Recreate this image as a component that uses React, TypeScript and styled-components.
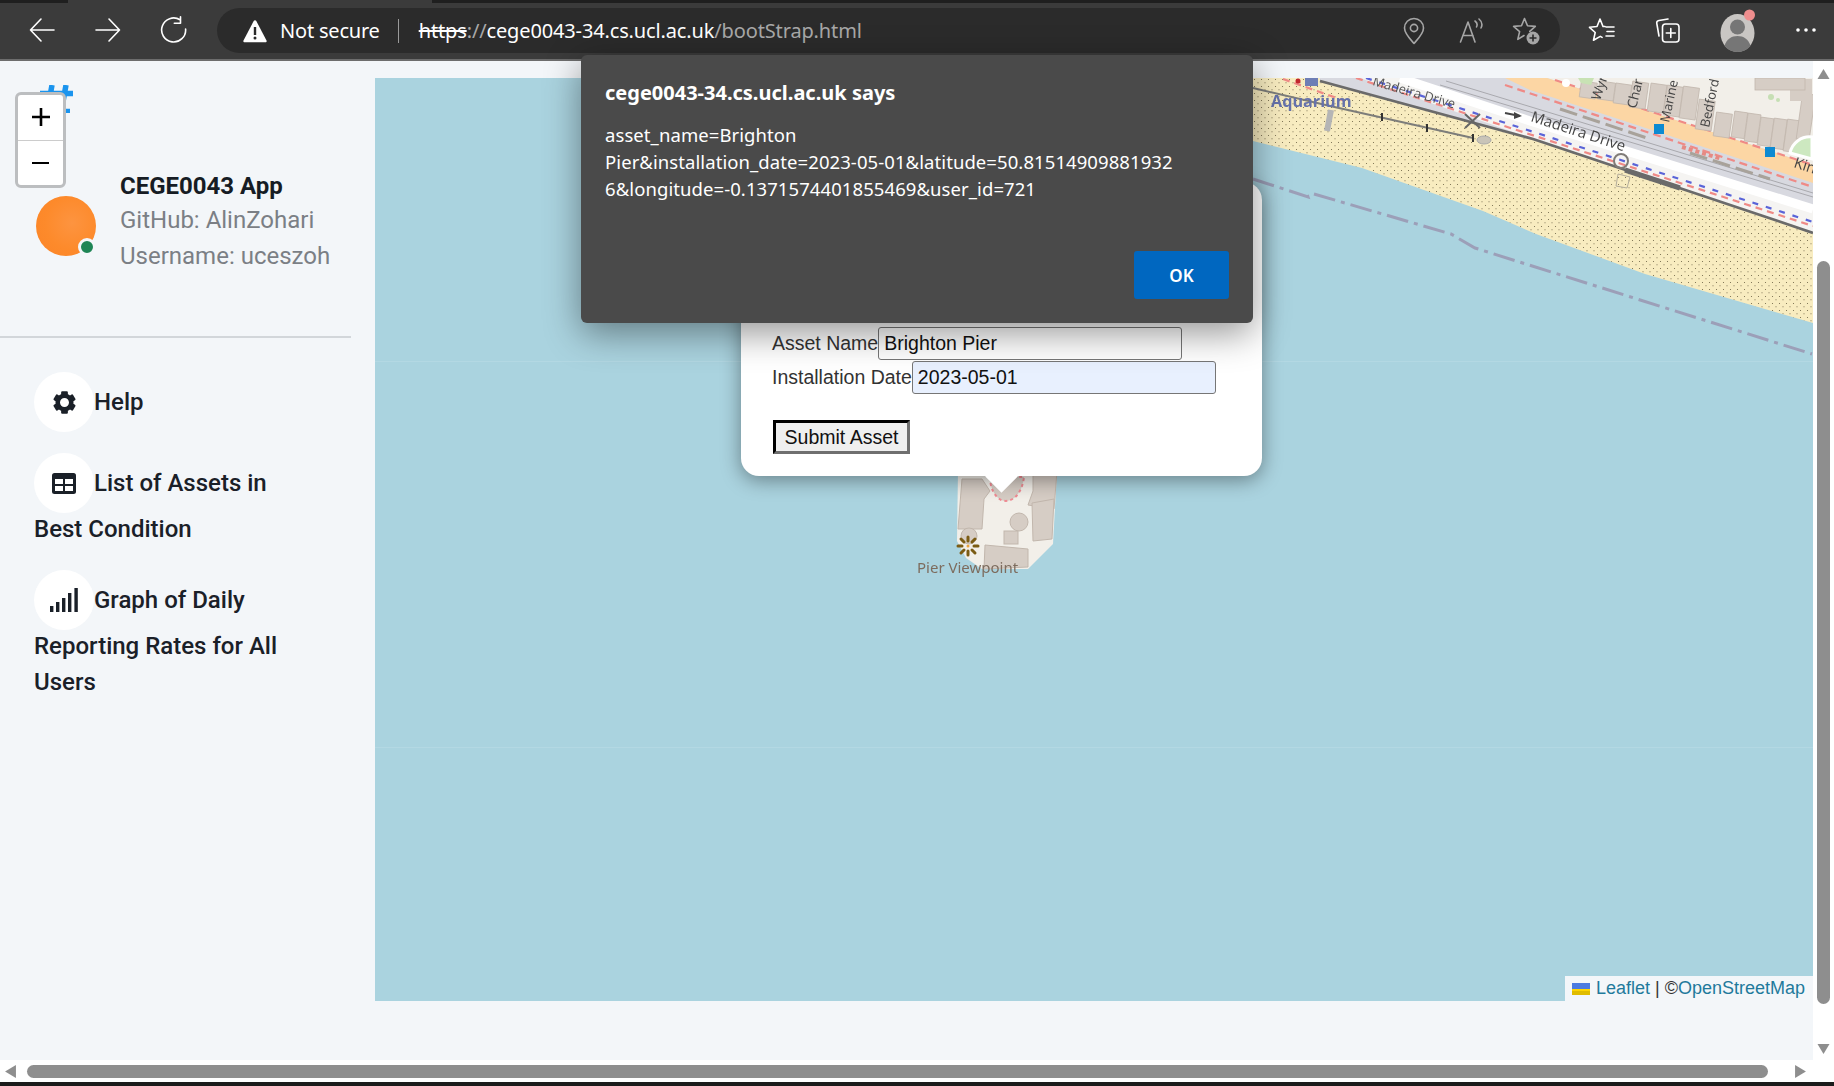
import React from "react";
import styled, { createGlobalStyle } from "styled-components";
import { BiSolidCog } from "react-icons/bi";

const Global = createGlobalStyle`
  html, body { margin: 0; padding: 0; width: 1834px; height: 1086px; overflow: hidden; background: #f3f6f9; }
  * { box-sizing: border-box; }
`;

const Shell = styled.div`
  position: relative;
  width: 1834px;
  height: 1086px;
  display: flex;
  flex-direction: column;
  overflow: hidden;
  background: #f3f6f9;
`;

/* ---------- browser chrome ---------- */
const TabStrip = styled.div`
  height: 3px;
  flex: none;
  background: #1f1f1f;
  display: flex;
`;
const TabEdge = styled.div`
  margin-left: 68px;
  width: 364px;
  background: #3b3b3b;
`;
const Toolbar = styled.div`
  height: 58px;
  flex: none;
  background: #3b3b3b;
  border-bottom: 2px solid #6d6d6d;
  display: flex;
  align-items: flex-start;
  padding-left: 9px;
  color: #fff;
`;
const NavButton = styled.div`
  width: 66px;
  height: 54px;
  display: flex;
  align-items: center;
  justify-content: center;
  flex: none;
`;
const AddressBar = styled.div`
  margin: 5px 8px 0 10px;
  width: 1343px;
  height: 45px;
  flex: none;
  background: #2b2b2b;
  border-radius: 23px;
  display: flex;
  align-items: center;
  padding: 0 6px 0 26px;
  font-family: "Noto Sans", sans-serif;
  font-size: 20px;
`;
const NotSecure = styled.span`
  margin-left: 13px;
  color: #fff;
  letter-spacing: -0.2px;
`;
const Separator = styled.div`
  width: 1px;
  height: 24px;
  background: #9a9a9a;
  margin: 0 20px 0 18px;
`;
const Url = styled.div`
  flex: 1;
  color: #fff;
  letter-spacing: -0.14px;
  white-space: nowrap;
`;
const Struck = styled.span`
  color: #fff;
  text-decoration: line-through;
`;
const Dim = styled.span`
  color: #a8a8a8;
`;
const BarIcon = styled.div`
  width: 56px;
  height: 45px;
  display: flex;
  align-items: center;
  justify-content: center;
  flex: none;
`;
const ToolIcon = styled.div`
  width: 67px;
  height: 54px;
  display: flex;
  align-items: center;
  justify-content: center;
  flex: none;
`;

/* ---------- page ---------- */
const Content = styled.div`
  flex: 1;
  min-height: 0;
  display: flex;
`;
const Sidebar = styled.aside`
  width: 375px;
  flex: none;
  font-family: Roboto, sans-serif;
  color: #1a2028;
`;
const Logo = styled.svg`
  display: block;
  margin: 24px 0 0 39px;
`;
const Profile = styled.div`
  display: flex;
  align-items: flex-start;
  margin-top: 58px;
  padding-left: 36px;
  height: 165px;
`;
const Avatar = styled.div`
  position: relative;
  width: 60px;
  height: 60px;
  border-radius: 50%;
  flex: none;
  margin: 25px 24px 0 0;
  background: radial-gradient(circle at 60% 45%, #fd9440 0%, #fd8a2b 55%, #fb8427 100%);
`;
const StatusDot = styled.span`
  position: absolute;
  right: 0;
  bottom: 0;
  width: 18px;
  height: 18px;
  border-radius: 50%;
  background: #1e8555;
  border: 3px solid #f3f6f9;
`;
const ProfileText = styled.div`
  display: flex;
  flex-direction: column;
`;
const AppName = styled.div`
  font-size: 24px;
  font-weight: 700;
  line-height: 31px;
  color: #161c24;
`;
const ProfileLine = styled.div`
  font-size: 24px;
  line-height: 36px;
  color: #7b7f85;
`;
const Rule = styled.hr`
  margin: 0 24px 0 0;
  border: 0;
  height: 2px;
  background: #d2d6da;
`;
const Nav = styled.nav`
  padding: 40px 74px 0 34px;
`;
const NavItem = styled.div`
  font-size: 24px;
  font-weight: 500;
  line-height: 36px;
  margin-bottom: 29px;
`;
const IconCircle = styled.span`
  display: inline-flex;
  align-items: center;
  justify-content: center;
  width: 60px;
  height: 60px;
  border-radius: 50%;
  background: #fff;
  vertical-align: middle;
  margin: -6px 0 -2px 0;
`;

const Main = styled.main`
  flex: 1;
  min-width: 0;
  padding-top: 17px;
`;
const MapFrame = styled.div`
  position: relative;
  width: 100%;
  height: 923px;
  background: #aad3df;
  overflow: hidden;
`;
const MapArt = styled.svg`
  position: absolute;
  inset: 0;
  filter: blur(0.45px);
`;
const Attribution = styled.div`
  position: absolute;
  right: 0;
  bottom: 0;
  height: 25px;
  padding: 0 8px 0 7px;
  display: flex;
  align-items: center;
  gap: 6px;
  background: #f3f6f9;
  font-family: "Liberation Sans", Arial, sans-serif;
  font-size: 18px;
  color: #333;
`;
const MapLink = styled.span`
  color: #1f7a9c;
`;
const Popup = styled.div`
  position: absolute;
  left: 366px;
  top: 104px;
  width: 521px;
  height: 294px;
  background: #fff;
  border-radius: 18px;
  box-shadow: 0 4px 20px rgba(0, 0, 0, 0.4);
  padding: 145px 0 0 32px;
  font-family: "Liberation Sans", Arial, sans-serif;
  font-size: 19.5px;
  color: #333;
`;
const PopupTip = styled.div`
  position: absolute;
  left: 238px;
  bottom: -17px;
  width: 44px;
  height: 17px;
  overflow: hidden;
  &::after {
    content: "";
    position: absolute;
    left: 10.5px;
    top: -11.5px;
    width: 23px;
    height: 23px;
    background: #fff;
    transform: rotate(45deg);
  }
`;
const FormRow = styled.div`
  display: flex;
  align-items: center;
  height: 33px;
  margin-bottom: 1px;
  margin-left: -1px;
`;
const Field = styled.input<{ $filled?: boolean }>`
  width: 304px;
  height: 33px;
  flex: none;
  padding: 1px 5px;
  border: 1px solid #767676;
  border-radius: 3px;
  background: ${(p) => (p.$filled ? "#e8f0fe" : "#fff")};
  font: inherit;
  color: #111;
  outline: none;
`;
const SubmitButton = styled.button`
  display: block;
  margin-top: 26px;
  width: 137px;
  height: 34px;
  padding: 0;
  background: #efefef;
  border-style: solid;
  border-width: 3px;
  border-color: #000 #6f6f6f #6f6f6f #000;
  font: inherit;
  color: #111;
`;

/* ---------- scrollbars ---------- */
const VScroll = styled.div`
  width: 21px;
  flex: none;
  background: #fff;
  display: flex;
  flex-direction: column;
  align-items: center;
  padding-top: 8px;
`;
const VThumb = styled.div`
  width: 13px;
  height: 743px;
  margin: 182px 0 40px;
  border-radius: 7px;
  background: #8e8e8e;
`;
const HScroll = styled.div`
  height: 22px;
  flex: none;
  background: #fff;
  display: flex;
  align-items: center;
  padding-left: 5px;
`;
const HThumb = styled.div`
  width: 1741px;
  height: 13px;
  margin: 0 27px 0 11px;
  border-radius: 7px;
  background: #8e8e8e;
`;
const BottomEdge = styled.div`
  height: 4px;
  flex: none;
  background: #1b1b1b;
`;

/* ---------- overlays ---------- */
const ZoomControl = styled.div`
  position: absolute;
  left: 15px;
  top: 92px;
  width: 51px;
  height: 96px;
  border: 3px solid #bcbec0;
  border-radius: 6px;
  background: #fff;
  display: flex;
  flex-direction: column;
  overflow: hidden;
`;
const ZoomButton = styled.div`
  flex: 1;
  display: flex;
  align-items: center;
  justify-content: center;
  & + & { border-top: 1px solid #ccc; }
`;
const Dialog = styled.div`
  position: absolute;
  left: 581px;
  top: 55px;
  width: 672px;
  height: 268px;
  background: #4a4a4a;
  border-radius: 6px;
  box-shadow: 0 10px 36px rgba(0, 0, 0, 0.42);
  padding: 24px 20px 0 24px;
  color: #fff;
  font-family: "Noto Sans", sans-serif;
`;
const DialogTitle = styled.div`
  font-size: 20px;
  font-weight: 700;
  line-height: 28px;
`;
const DialogBody = styled.div`
  margin-top: 14px;
  font-size: 18.5px;
  line-height: 27px;
  letter-spacing: 0.08px;
  white-space: nowrap;
`;
const DialogActions = styled.div`
  display: flex;
  justify-content: flex-end;
  margin: 49px 4px 0 0;
`;
const OkButton = styled.div`
  width: 95px;
  height: 48px;
  border-radius: 3px;
  background: #0067c0;
  display: flex;
  align-items: center;
  justify-content: center;
  font-size: 17px;
  font-weight: 600;
`;

/* ---------- drawings ---------- */
const Line = ({ d, w = 1.6, c = "#fff" }: { d: string; w?: number; c?: string }) => (
  <path d={d} fill="none" stroke={c} strokeWidth={w} strokeLinecap="round" strokeLinejoin="round" />
);
const BackIcon = () => (
  <svg width="28" height="28" viewBox="0 0 28 28">
    <Line d="M26 14H2.5M13 3 2.5 14 13 25" />
  </svg>
);
const ForwardIcon = () => (
  <svg width="28" height="28" viewBox="0 0 28 28">
    <Line d="M2 14h23.5M15 3l10.5 11L15 25" />
  </svg>
);
const ReloadIcon = () => (
  <svg width="28" height="28" viewBox="0 0 28 28">
    <Line d="M20 3.8A12 12 0 1 0 25.6 13M20.5 0.8v6.4h-6.2" />
  </svg>
);
const WarnIcon = () => (
  <svg width="24" height="24" viewBox="0 0 24 24">
    <path d="M12 1.2c.6 0 1 .3 1.3.8l10.2 19.6c.4.8-.1 1.6-1 1.6H1.5c-.9 0-1.4-.8-1-1.6L10.7 2c.3-.5.7-.8 1.3-.8z" fill="#fff" />
    <rect x="10.8" y="8" width="2.4" height="8" fill="#2b2b2b" />
    <circle cx="12" cy="19" r="1.5" fill="#2b2b2b" />
  </svg>
);
const PinIcon = () => (
  <svg width="24" height="28" viewBox="0 0 24 28">
    <Line c="#a6a6a6" d="M12 26.5C8 22 2.5 16.5 2.5 11a9.5 9.5 0 0 1 19 0c0 5.5-5.5 11-9.5 15.5z" />
    <circle cx="12" cy="11" r="3.6" fill="none" stroke="#a6a6a6" strokeWidth="1.6" />
  </svg>
);
const ReadIcon = () => (
  <svg width="26" height="26" viewBox="-2 0 26 26">
    <Line c="#a6a6a6" d="M1.5 24 9 4l7 20M4 17.5h10M16 3c2 1.500 2.500 4 1.500 6M20 1c3 2.500 3.500 6 2 9" />
  </svg>
);
const FavAddIcon = () => (
  <svg width="30" height="30" viewBox="-1 0 30 30">
    <Line c="#a6a6a6" d="M12.5 2.5l3 7.2 7.800.7-5.500 5M12 19.500l-6.200 3.900 1.800-7.800-6-5.200 7.900-.7 3-7.200" />
    <circle cx="21" cy="22" r="6.500" fill="#a6a6a6" />
    <path d="M21 18.500v7M17.500 22h7" stroke="#2b2b2b" strokeWidth="1.600" />
  </svg>
);
const FavoritesIcon = () => (
  <svg width="28" height="28" viewBox="0 0 28 28">
    <Line d="M12 3 9 10.500l-7.500.8 5.700 5.200-1.700 7.700 6.800-3.800 1.800 1M12 3l3 7.500h2M18 11h8M19 15.500h7M18 20h8" />
  </svg>
);
const CollectionsIcon = () => (
  <svg width="30" height="30" viewBox="2 0 30 30">
    <Line d="M16 4l-9 1.500c-1.500.3-2.500 1.500-2.200 3L7 21" />
    <rect x="10.500" y="9" width="16.500" height="18" rx="3" fill="none" stroke="#fff" strokeWidth="1.600" />
    <Line d="M18.800 13.500v9M14.300 18h9" />
  </svg>
);
const ProfileIcon = () => (
  <svg width="38" height="44" viewBox="-3.500 0 38 44">
    <ellipse cx="17" cy="25" rx="17" ry="19" fill="#c9c6c3" />
    <circle cx="17" cy="19" r="7.500" fill="#767676" />
    <path d="M4 38c2-7 7-10 13-10s11 3 13 10c-3.500 4-8 6-13 6s-9.500-2-13-6z" fill="#767676" />
    <circle cx="29" cy="7" r="5.500" fill="#ef8e8e" />
  </svg>
);
const DotsIcon = () => (
  <svg width="28" height="6" viewBox="-6 0 28 6">
    <circle cx="3" cy="3" r="1.800" fill="#fff" />
    <circle cx="11" cy="3" r="1.800" fill="#fff" />
    <circle cx="19" cy="3" r="1.800" fill="#fff" />
  </svg>
);
const TableIcon = () => (
  <svg width="24" height="21" viewBox="0 0 24 21">
    <rect width="24" height="21" rx="2.500" fill="#1a2028" />
    <rect x="3" y="6" width="8" height="5" fill="#fff" />
    <rect x="13" y="6" width="8" height="5" fill="#fff" />
    <rect x="3" y="13" width="8" height="5" fill="#fff" />
    <rect x="13" y="13" width="8" height="5" fill="#fff" />
  </svg>
);
const SignalIcon = () => (
  <svg width="28" height="24" viewBox="0 0 28 24">
    <rect x="0" y="18" width="3.400" height="6" fill="#1a2028" />
    <rect x="6" y="14" width="3.400" height="10" fill="#1a2028" />
    <rect x="12" y="10" width="3.400" height="14" fill="#1a2028" />
    <rect x="18" y="5" width="3.400" height="19" fill="#1a2028" />
    <rect x="24.400" y="0" width="3.400" height="24" fill="#1a2028" />
  </svg>
);
const Arrow = ({ dir }: { dir: "up" | "down" | "left" | "right" }) => {
  const pts = { up: "6,0 12,10 0,10", down: "0,0 12,0 6,10", left: "10,0 10,12 0,6", right: "0,0 10,6 0,12" }[dir];
  const horizontal = dir === "left" || dir === "right";
  return (
    <svg width={horizontal ? 11 : 13} height={horizontal ? 13 : 10} viewBox={horizontal ? "0 0 10 12" : "0 0 12 10"} style={{ flex: "none" }}>
      <polygon points={pts} fill="#8e8e8e" />
    </svg>
  );
};

const C = { land: "#f2efe9", bld: "#d6cdc5", bldEdge: "#c2b7ad", sand: "#f8ecc0", orange: "#fcd6a4", rail: "#d8d9e0" };

const terrace: [number, number, number][] = [
  [1582, 76, 16], [1600, 78, 18], [1616, 82, 20], [1632, 86, 26], [1650, 90, 28], [1666, 94, 30], [1682, 97, 32],
  [1698, 108, 30], [1716, 115, 24], [1734, 116, 26], [1747, 120, 28], [1760, 124, 28], [1773, 127, 30], [1786, 130, 32], [1799, 118, 46],
];

const MapDrawing = () => (
  <MapArt width="1438" height="923" viewBox="375 77 1438 923">
    <defs>
      <pattern id="sandDots" width="7" height="7" patternUnits="userSpaceOnUse">
        <circle cx="1.500" cy="1.500" r="0.550" fill="#6f6548" />
        <circle cx="5" cy="4.800" r="0.550" fill="#6f6548" />
      </pattern>
    </defs>
    <rect x="375" y="360" width="1438" height="1" fill="#b3d8e3" />
    <rect x="375" y="746" width="1438" height="1" fill="#b3d8e3" />
    {/* beach */}
    <polygon points="1253,77 1813,77 1813,322 1645,273 1536,233 1483,210 1362,167 1253,140" fill={C.sand} />
    <polygon points="1253,77 1813,77 1813,322 1645,273 1536,233 1483,210 1362,167 1253,140" fill="url(#sandDots)" />
    {/* ground above the beach */}
    <polygon points="1320,77 1813,77 1813,232 1533,138 1320,80" fill={C.rail} />
    <polygon points="1360,77 1400,77 1813,208 1813,232 1533,138" fill="#f5f4f2" />
    <polygon points="1547,77 1813,77 1813,164" fill={C.land} />
    <polygon points="1505,77 1547,77 1813,164 1813,182 1530,89" fill={C.orange} />
    <path d="M1400 77 1530 120 1813 208" stroke="#fff" strokeWidth="9" fill="none" />
    <path d="M1440 84 1813 196M1446 80 1813 192" stroke="#a9a9ae" strokeWidth="1" fill="none" />
    {/* dashed paths */}
    <path d="M1505 84 1813 186M1555 79 1813 164" stroke="#ef8a86" strokeWidth="2.200" strokeDasharray="8 5" fill="none" />
    <path d="M1283 78 1345 100M1356 77 1813 225" stroke="#ef8a86" strokeWidth="2.200" strokeDasharray="7 5" fill="none" />
    <path d="M1366 77 1813 221" stroke="#5a64d8" strokeWidth="2.200" strokeDasharray="6 8" fill="none" />
    <path d="M1320 80 1533 138 1778 220 1813 232" stroke="#6a6a6a" strokeWidth="2.800" fill="none" />
    <path d="M1625 169 1680 187" stroke="#6a6a6a" strokeWidth="5" fill="none" />
    <path d="M1560 108 1650 138M1690 152 1770 178" stroke="#a8a29a" strokeWidth="3" fill="none" strokeDasharray="18 6" />
    <path d="M1682 146 1722 158" stroke="#e58a84" strokeWidth="4" strokeDasharray="4 3" fill="none" />
    {/* buildings */}
    {terrace.map(([x, y, h]) => (
      <rect key={x} x={x} y={y - h + 20} width={x > 1730 ? 13 : 16} height={h} fill={C.bld} stroke={C.bldEdge} strokeWidth="0.800" transform={`rotate(8 ${x} ${y})`} />
    ))}
    <rect x="1790" y="78" width="22" height="22" fill={C.bld} />
    <rect x="1755" y="77" width="50" height="12" fill={C.bld} stroke={C.bldEdge} strokeWidth="0.800" />
    <circle cx="1771" cy="96" r="3" fill="#c6dfb4" />
    <circle cx="1778" cy="99" r="2" fill="#c6dfb4" />
    <path d="M1578 77h16l-3 7-10-2z" fill="#c8e2b4" />
    <circle cx="1566" cy="82" r="4" fill="#fff" />
    <path d="M1790 152a20 20 0 0 1 22-16v22z" fill="#cde8c0" stroke="#fff" strokeWidth="3" />
    {/* aquarium corner */}
    <rect x="1305" y="77" width="13" height="8" fill="#6e7eb5" />
    <circle cx="1298" cy="80" r="2.500" fill="#c0262d" />
    <path d="M1331 109 1327 130" stroke="#b5b5b5" strokeWidth="6" />
    {/* pier on the beach */}
    <path d="M1253 87 1330 105 1473 137" stroke="#7d7d7a" strokeWidth="2" fill="none" />
    <path d="M1382 112v8M1427 123v8M1473 133v8" stroke="#333" strokeWidth="2" />
    <ellipse cx="1484" cy="139" rx="7" ry="4" fill="#c9c4b8" stroke="#aaa" />
    <path d="M1465 113 1480 127M1480 113 1465 127" stroke="#666" strokeWidth="2" />
    <path d="M1505 112 1520 115" stroke="#444" strokeWidth="2" />
    <polygon points="1522,115 1514,111 1514,118" fill="#444" />
    {/* small shapes over the beach */}
    <circle cx="1621" cy="160" r="7" fill="none" stroke="#807c78" strokeWidth="2" />
    <polygon points="1618,173 1630,176 1627,187 1616,185" fill="none" stroke="#b4ad9b" />
    {/* markers */}
    <rect x="1654" y="123" width="10" height="10" fill="#0d8ad2" />
    <rect x="1765" y="146" width="10" height="10" fill="#0d8ad2" />
    {/* boundary */}
    <path d="M1253 178 1290 190 1308 196 1306 190M1314 193 1451 233 1475 247 1812 353" stroke="#9c9fb8" strokeWidth="3" strokeDasharray="22 6 4 6" fill="none" />
    {/* pier head */}
    <polygon points="958,470 1057,470 1053,543 1028,568 982,568 966,557 957,540" fill={C.land} />
    <path d="M962 478h20l8 12-6 8-2 30-24 0z" fill={C.bld} stroke={C.bldEdge} />
    <path d="M1033 470h24l-3 38-26-4 5-14z" fill={C.bld} stroke={C.bldEdge} />
    <path d="M1032 502 1054 498 1052 538 1033 540z" fill={C.bld} stroke={C.bldEdge} />
    <circle cx="1019" cy="521" r="9" fill={C.bld} stroke={C.bldEdge} />
    <rect x="1004" y="530" width="14" height="13" fill={C.bld} stroke={C.bldEdge} />
    <circle cx="969" cy="535" r="8" fill={C.bld} stroke={C.bldEdge} />
    <path d="M985 544 1028 548 1028 566 984 568z" fill={C.bld} stroke={C.bldEdge} />
    <path d="M990 476c0 10 4 19 11 23 11 4 21-6 23-23z" fill={C.bld} stroke="#ef8a92" strokeWidth="2" strokeDasharray="3 3" />
    <g stroke="#7b5c14" strokeWidth="3" strokeLinecap="round">
      <path d="M968 536v4M968 550v4M958 545h4M974 545h4M961 538l3 3M975 538l-3 3M961 552l3-3M975 552l-3-3" />
    </g>
    <circle cx="968" cy="545" r="1.500" fill="#e8a23c" />
    <text x="917" y="572" fontFamily="'Noto Sans', sans-serif" fontSize="15" fill="#7d6c5e">Pier Viewpoint</text>
    {/* labels */}
    <text x="1271" y="106" fontFamily="'Open Sans', sans-serif" fontWeight="700" fontSize="16.200" fill="#6672ab">Aquarium</text>
    <text transform="translate(1372 84) rotate(16)" fontFamily="'Open Sans', sans-serif" fontSize="13" fill="#555">Madeira Drive</text>
    <text transform="translate(1530 120) rotate(18)" fontFamily="'Open Sans', sans-serif" fontSize="15" fill="#444">Madeira Drive</text>
    <text transform="translate(1600 100) rotate(-72)" fontFamily="'Open Sans', sans-serif" fontSize="13.500" fill="#444">Wyn</text>
    <text transform="translate(1636 108) rotate(-76)" fontFamily="'Open Sans', sans-serif" fontSize="13.500" fill="#444">Char</text>
    <text transform="translate(1669 122) rotate(-78)" fontFamily="'Open Sans', sans-serif" fontSize="13" fill="#444">Marine</text>
    <text transform="translate(1709 127) rotate(-78)" fontFamily="'Open Sans', sans-serif" fontSize="13" fill="#444">Bedford</text>
    <text transform="translate(1793 166) rotate(18)" fontFamily="'Open Sans', sans-serif" fontSize="15" fill="#444">Kin</text>
  </MapArt>
);

const Flag = () => (
  <svg width="18" height="12" viewBox="0 0 18 12">
    <rect width="18" height="6" fill="#4C7BE1" />
    <rect y="6" width="18" height="2" fill="#FFD500" />
    <rect y="8" width="18" height="4" fill="#E0BC00" />
  </svg>
);

export default function App() {
  return (
    <Shell>
      <Global />
      <TabStrip><TabEdge /></TabStrip>
      <Toolbar>
        <NavButton><BackIcon /></NavButton>
        <NavButton><ForwardIcon /></NavButton>
        <NavButton><ReloadIcon /></NavButton>
        <AddressBar>
          <WarnIcon />
          <NotSecure>Not secure</NotSecure>
          <Separator />
          <Url>
            <Dim><Struck>https</Struck>://</Dim>cege0043-34.cs.ucl.ac.uk<Dim>/bootStrap.html</Dim>
          </Url>
          <BarIcon><PinIcon /></BarIcon>
          <BarIcon><ReadIcon /></BarIcon>
          <BarIcon><FavAddIcon /></BarIcon>
        </AddressBar>
        <ToolIcon><FavoritesIcon /></ToolIcon>
        <ToolIcon><CollectionsIcon /></ToolIcon>
        <ToolIcon><ProfileIcon /></ToolIcon>
        <ToolIcon><DotsIcon /></ToolIcon>
      </Toolbar>
      <Content>
        <Sidebar>
          <Logo width="34" height="28" viewBox="0 0 34 28">
            <path d="M13 0 8 28M27 0 22 28M1 8.500h33M24 26.500h7" stroke="#1a94ee" strokeWidth="5.500" fill="none" />
          </Logo>
          <Profile>
            <Avatar><StatusDot /></Avatar>
            <ProfileText>
              <AppName>CEGE0043 App</AppName>
              <ProfileLine>GitHub: AlinZohari</ProfileLine>
              <ProfileLine>Username: uceszoh</ProfileLine>
            </ProfileText>
          </Profile>
          <Rule />
          <Nav>
            <NavItem><IconCircle><BiSolidCog size={27} /></IconCircle>Help</NavItem>
            <NavItem><IconCircle><TableIcon /></IconCircle>List of Assets in Best Condition</NavItem>
            <NavItem><IconCircle><SignalIcon /></IconCircle>Graph of Daily Reporting Rates for All Users</NavItem>
          </Nav>
        </Sidebar>
        <Main>
          <MapFrame>
            <MapDrawing />
            <Popup>
              <FormRow>Asset Name<Field readOnly value="Brighton Pier" /></FormRow>
              <FormRow>Installation Date<Field readOnly $filled value="2023-05-01" /></FormRow>
              <SubmitButton>Submit Asset</SubmitButton>
              <PopupTip />
            </Popup>
            <Attribution>
              <Flag />
              <span><MapLink>Leaflet</MapLink> | ©<MapLink>OpenStreetMap</MapLink></span>
            </Attribution>
          </MapFrame>
        </Main>
        <VScroll>
          <Arrow dir="up" />
          <VThumb />
          <Arrow dir="down" />
        </VScroll>
      </Content>
      <HScroll>
        <Arrow dir="left" />
        <HThumb />
        <Arrow dir="right" />
      </HScroll>
      <BottomEdge />
      <ZoomControl>
        <ZoomButton>
          <svg width="20" height="20" viewBox="0 0 20 20"><path d="M10 1v18M1 10h18" stroke="#000" strokeWidth="2.600" /></svg>
        </ZoomButton>
        <ZoomButton>
          <svg width="20" height="4" viewBox="0 0 20 4"><path d="M1 2h17" stroke="#000" strokeWidth="2" /></svg>
        </ZoomButton>
      </ZoomControl>
      <Dialog>
        <DialogTitle>cege0043-34.cs.ucl.ac.uk says</DialogTitle>
        <DialogBody>
          asset_name=Brighton<br />
          Pier&amp;installation_date=2023-05-01&amp;latitude=50.81514909881932<br />
          6&amp;longitude=-0.1371574401855469&amp;user_id=721
        </DialogBody>
        <DialogActions><OkButton>OK</OkButton></DialogActions>
      </Dialog>
    </Shell>
  );
}
